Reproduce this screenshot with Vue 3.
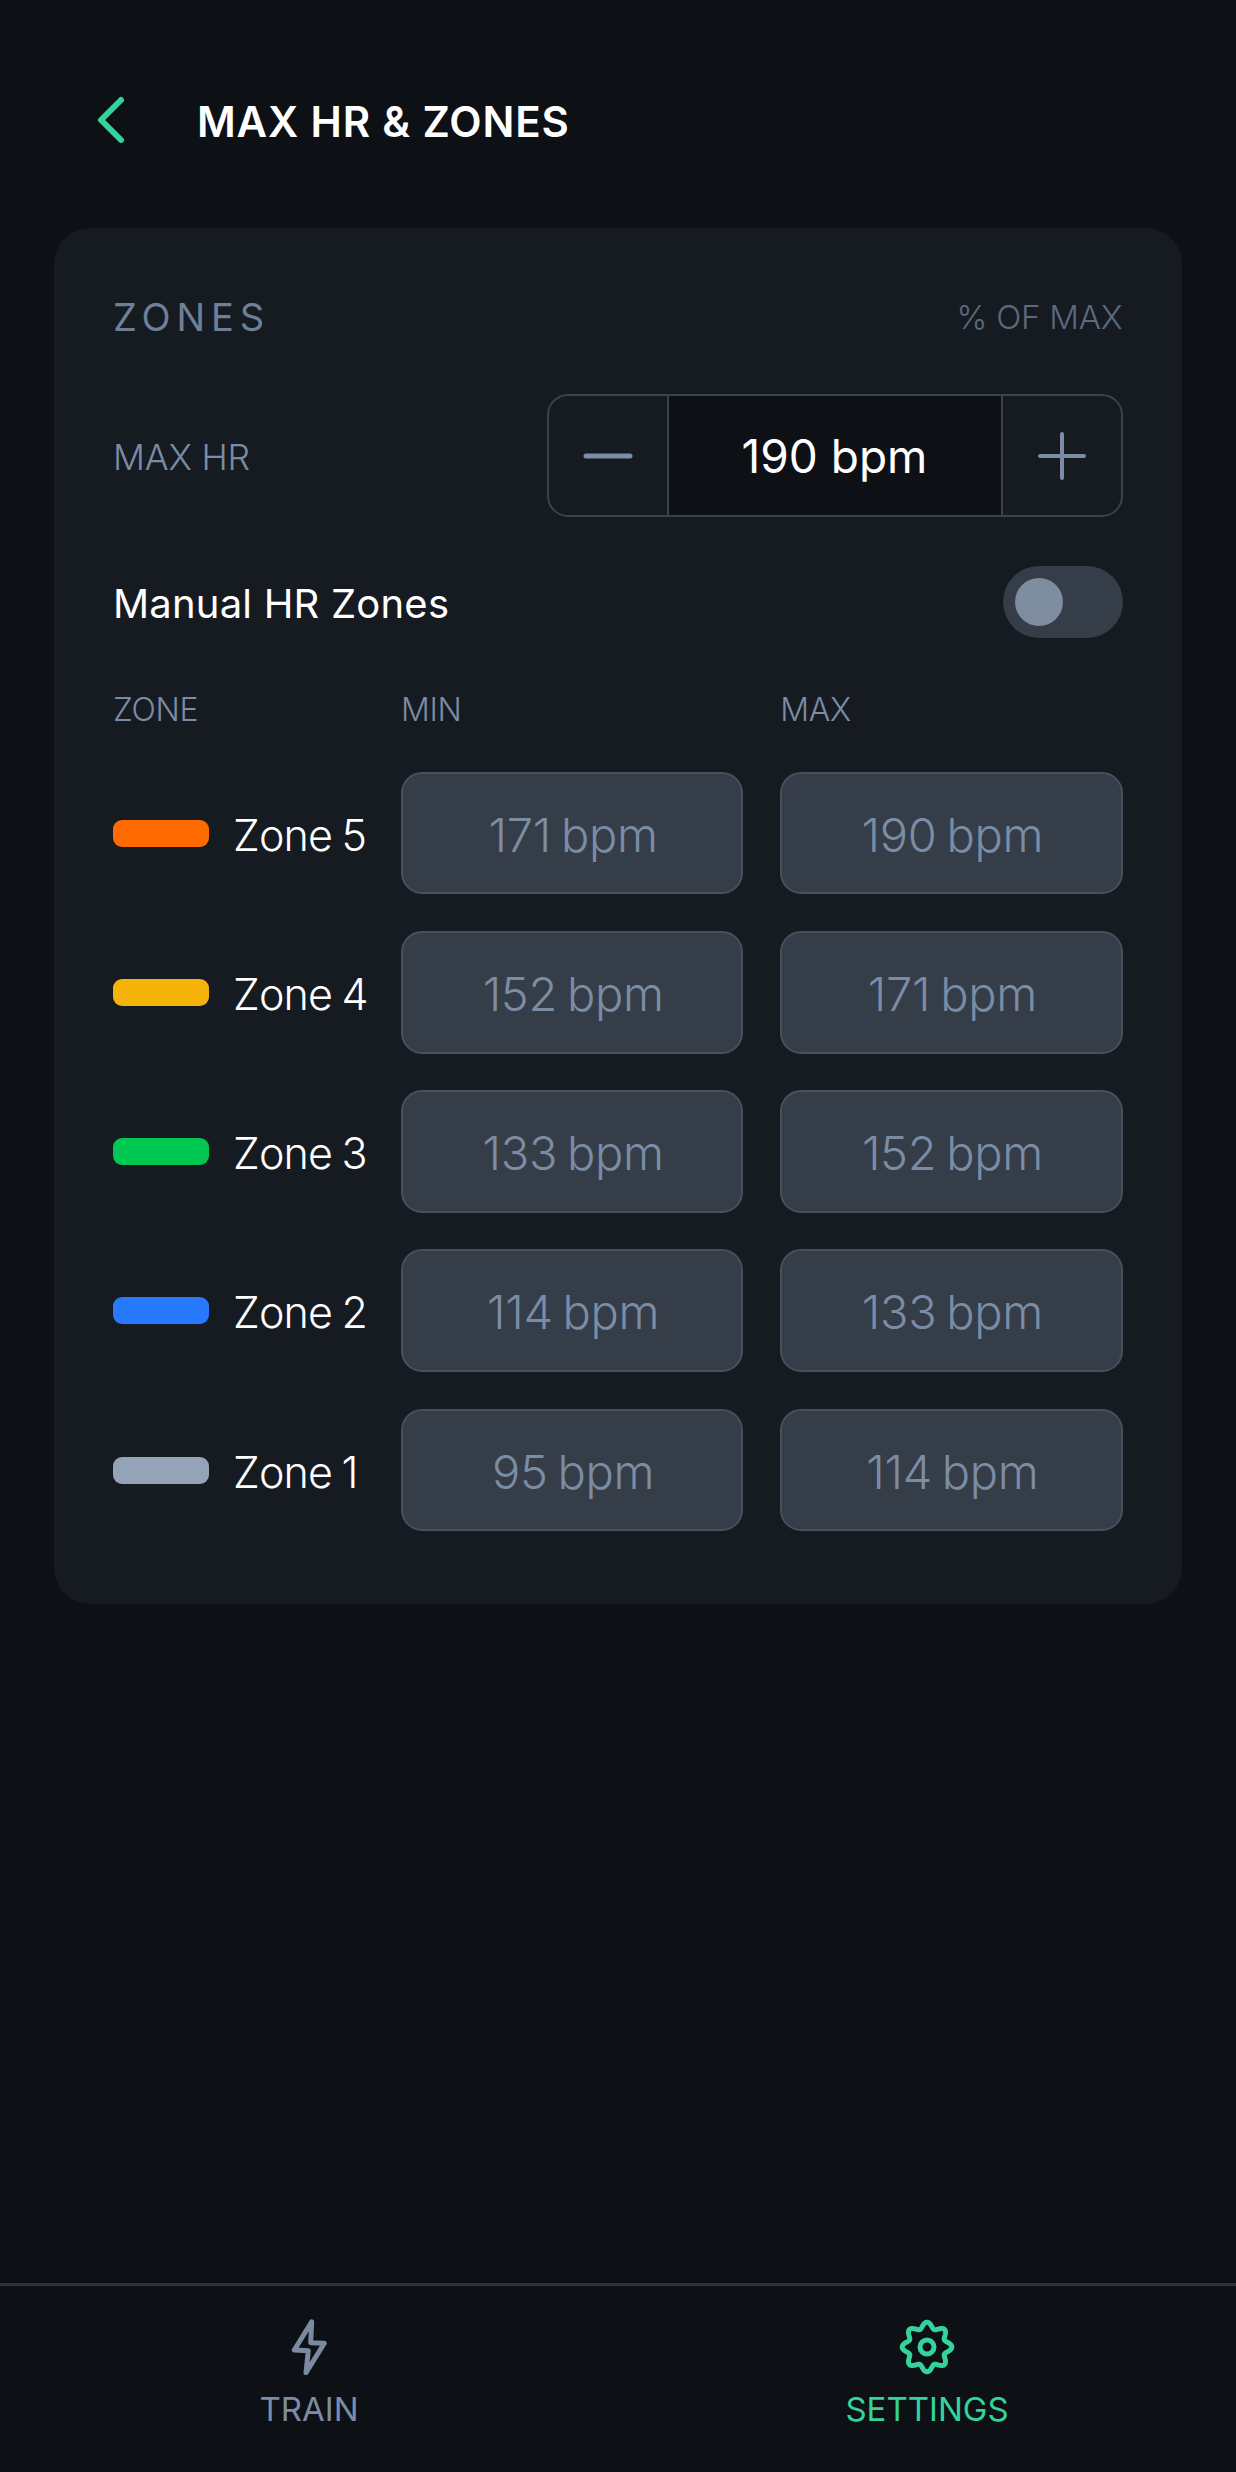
<template>
  <div class="screen">
    <header class="top-bar">
      <svg class="back" width="30" height="50" viewBox="0 0 30 50">
        <path d="M25 5 L5 25 L25 45" fill="none" stroke="#34d399" stroke-width="6" stroke-linecap="round" stroke-linejoin="round" />
      </svg>
      <h1 class="title">MAX HR &amp; ZONES</h1>
    </header>

    <section class="card">
      <div class="card-head">
        <span class="card-title">ZONES</span>
        <span class="card-note">% OF MAX</span>
      </div>

      <div class="max-row">
        <span class="max-label">MAX HR</span>
        <div class="stepper">
          <button class="step">
            <svg width="50" height="50" viewBox="0 0 50 50">
              <path d="M3 25 H47" stroke="#7b8ca5" stroke-width="5" stroke-linecap="round" />
            </svg>
          </button>
          <div class="step-value">190 bpm</div>
          <button class="step">
            <svg width="50" height="50" viewBox="0 0 50 50">
              <path d="M3 25 H47 M25 3 V47" stroke="#7b8ca5" stroke-width="4" stroke-linecap="round" />
            </svg>
          </button>
        </div>
      </div>

      <div class="manual-row">
        <span class="manual-label">Manual HR Zones</span>
        <div class="toggle"><div class="knob"></div></div>
      </div>

      <div class="zone-grid zone-head">
        <span>ZONE</span>
        <span>MIN</span>
        <span>MAX</span>
      </div>

      <div class="zone-list">
        <div v-for="zone in zones" :key="zone.name" class="zone-grid">
          <div class="zone-name">
            <span class="swatch" :style="{ background: zone.color }"></span>
            <span class="zone-label">{{ zone.name }}</span>
          </div>
          <div class="bpm-box">{{ zone.min }} bpm</div>
          <div class="bpm-box">{{ zone.max }} bpm</div>
        </div>
      </div>
    </section>

    <nav class="bottom-nav">
      <div class="nav-item">
        <svg width="56" height="56" viewBox="0 0 56 56">
          <path d="M30.7 2.7 L13.3 31 L27.3 31.7 L25 53.7 L43.3 24.3 L29.7 23.7 Z" fill="none" stroke="#7b8a9e" stroke-width="5" stroke-linecap="round" stroke-linejoin="round" />
        </svg>
        <span>TRAIN</span>
      </div>
      <div class="nav-item active">
        <svg width="56" height="56" viewBox="0 0 56 56">
          <path :d="gearPath" fill="none" stroke="#34d399" stroke-width="5" stroke-linejoin="round" />
          <circle cx="28" cy="28" r="7" fill="none" stroke="#34d399" stroke-width="5" />
        </svg>
        <span>SETTINGS</span>
      </div>
    </nav>
  </div>
</template>

<script setup>
const zones = [
  { name: 'Zone 5', color: '#ff6b00', min: 171, max: 190 },
  { name: 'Zone 4', color: '#f5b30a', min: 152, max: 171 },
  { name: 'Zone 3', color: '#00c853', min: 133, max: 152 },
  { name: 'Zone 2', color: '#2979ff', min: 114, max: 133 },
  { name: 'Zone 1', color: '#94a3b8', min: 95, max: 114 }
]

// scalloped outline with 8 bumps
const gearPath = (() => {
  const pts = []
  for (let i = 0; i < 240; i++) {
    const a = (i / 240) * Math.PI * 2
    const r = 21.8 + 3 * Math.cos(8 * a)
    const x = 28 + r * Math.sin(a)
    const y = 28 - r * Math.cos(a)
    pts.push(`${x.toFixed(2)} ${y.toFixed(2)}`)
  }
  return `M${pts.join(' L')} Z`
})()
</script>

<style scoped>
.screen {
  display: flex;
  flex-direction: column;
  height: 2472px;
  background: #0d1015;
  font-family: Inter, "Liberation Sans", sans-serif;
  color: #fff;
  overflow: hidden;
}

.top-bar {
  display: flex;
  align-items: center;
  height: 228px;
  padding: 16px 0 0 96px;
  box-sizing: border-box;
}
.back {
  display: block;
  margin: -4px 71px 0 0;
}
.title {
  margin: 0;
  font-size: 42px;
  font-weight: 600;
  letter-spacing: 0.85px;
  line-height: 48px;
}

.card {
  margin: 0 54px;
  padding: 60px 59.5px 73px 59px;
  background: #161b22;
  border-radius: 36px;
}
.card-head {
  display: flex;
  justify-content: space-between;
  align-items: center;
  height: 58px;
}
.card-title {
  font-size: 38px;
  font-weight: 400;
  letter-spacing: 5.9px;
  color: #6f7f96;
}
.card-note {
  font-size: 33px;
  font-weight: 300;
  letter-spacing: -0.2px;
  color: #5b6a7d;
}

.max-row {
  display: flex;
  justify-content: space-between;
  align-items: center;
  margin-top: 48px;
}
.max-label {
  font-size: 35.5px;
  font-weight: 300;
  letter-spacing: -0.2px;
  color: #7b8ca5;
  margin-top: 4px;
}
.stepper {
  display: flex;
  width: 576px;
  height: 123.4px;
  box-sizing: border-box;
  border: 2px solid #3a424d;
  border-radius: 21px;
  overflow: hidden;
}
.step {
  display: flex;
  align-items: center;
  justify-content: center;
  width: 118px;
  padding: 0;
  background: transparent;
  border: 0;
}
.step-value {
  flex: 1;
  display: flex;
  align-items: center;
  justify-content: center;
  background: #0d1015;
  border-left: 2px solid #3a424d;
  border-right: 2px solid #3a424d;
  font-size: 46px;
  font-weight: 400;
}

.manual-row {
  display: flex;
  justify-content: space-between;
  align-items: center;
  margin-top: 48.6px;
  height: 72px;
}
.manual-label {
  font-size: 40px;
  font-weight: 400;
  letter-spacing: 0.2px;
  margin-top: 4px;
}
.toggle {
  display: flex;
  align-items: center;
  width: 120px;
  height: 72px;
  padding-left: 12px;
  box-sizing: border-box;
  background: #353d48;
  border-radius: 36px;
}
.knob {
  width: 48px;
  height: 48px;
  border-radius: 50%;
  background: #7f8da1;
}

.zone-grid {
  display: grid;
  grid-template-columns: 251px 342.25px 342.25px;
  column-gap: 37px;
  align-items: center;
}
.zone-head {
  margin-top: 52px;
  height: 40px;
  font-size: 32px;
  font-weight: 300;
  letter-spacing: -0.3px;
  color: #7b8ca5;
}
.zone-list {
  display: flex;
  flex-direction: column;
  gap: 36.65px;
  margin-top: 41.8px;
}
.zone-name {
  display: flex;
  align-items: center;
  gap: 24px;
  font-size: 43px;
  font-weight: 300;
  letter-spacing: -0.8px;
  word-spacing: -2px;
  white-space: nowrap;
}
.zone-label {
  margin-top: 3px;
}
.swatch {
  flex: none;
  width: 96px;
  height: 27px;
  border-radius: 9px;
}
.bpm-box {
  display: flex;
  align-items: center;
  justify-content: center;
  height: 122.6px;
  padding: 2px 0 0 2px;
  box-sizing: border-box;
  background: #353d48;
  border: 2px solid #47505c;
  border-radius: 21px;
  font-size: 47px;
  font-weight: 300;
  letter-spacing: -0.3px;
  word-spacing: -3px;
  color: #7b8ca5;
}

.bottom-nav {
  display: flex;
  margin-top: auto;
  height: 189px;
  box-sizing: border-box;
  border-top: 3px solid #2d343e;
}
.nav-item {
  flex: 1;
  display: flex;
  flex-direction: column;
  align-items: center;
  padding-top: 33px;
  font-size: 33px;
  font-weight: 400;
  color: #7b8ca5;
}
.nav-item svg {
  display: block;
}
.nav-item span {
  margin-top: 12px;
  line-height: 44px;
}
.nav-item.active {
  color: #34d399;
}
</style>
